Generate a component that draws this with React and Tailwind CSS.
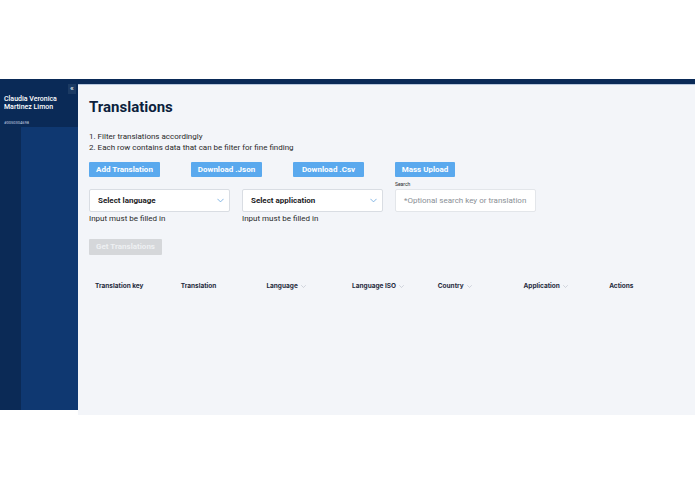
import React from "react";

const Chevron = ({ className = "" }) => (
  <svg viewBox="0 0 10 6" className={className} fill="none" stroke="currentColor" strokeWidth="1.2" strokeLinecap="round" strokeLinejoin="round">
    <path d="M1 1l4 4 4-4" />
  </svg>
);

const Btn = ({ children, w }) => (
  <button className={`h-[15px] ${w} bg-[#5aa9ee] text-white text-[8px] font-bold rounded-[1px] flex items-center justify-center`}>
    {children}
  </button>
);

const Select = ({ label }) => (
  <div className="w-[141px] h-[23px] bg-white border border-[#d9dde3] rounded-[2px] flex items-center justify-between pl-[8px] pr-[5px]">
    <span className="text-[8px] font-bold text-[#1d1d1f]">{label}</span>
    <Chevron className="w-[7px] h-[5px] text-[#6fa9df]" />
  </div>
);

const cols = ["Translation key", "Translation", "Language", "Language ISO", "Country", "Application", "Actions"];
const withChevron = new Set(["Language", "Language ISO", "Country", "Application"]);

export default function App() {
  return (
    <div className="w-[695px] h-[494px] bg-white" style={{ fontFamily: "Roboto, 'Liberation Sans', sans-serif" }}>
      <div className="h-[79px]" />
      <div className="flex h-[336px]">
        {/* Sidebar */}
        <div className="w-[78px] h-[331px] flex flex-col">
          <div className="h-[48px] bg-[#0a2a57] relative pl-[4px] pt-[16px]">
            <div className="text-white text-[7px] leading-[8px] font-medium">Claudia Veronica<br />Martinez Limon</div>
            <div className="text-[#c9d3e2] text-[4px] mt-[9px]">#0050304698</div>
            <div className="absolute right-[2px] top-[5px] w-[8px] h-[10px] bg-[#1b3a63] text-white text-[8px] leading-[10px] flex items-center justify-center">«</div>
          </div>
          <div className="flex-1 flex">
            <div className="w-[21px] bg-[#0b2a56]" />
            <div className="flex-1 bg-[#0f3871]" />
          </div>
        </div>
        {/* Main */}
        <div className="flex-1 bg-[#f3f5f9] flex flex-col">
          <div className="h-[5px] bg-[#0a2a57]" />
          <div className="h-[1px] bg-[#b9c8de]" />
          <div className="pl-[11px] pt-[12px]">
            <h1 className="text-[15px] font-bold text-[#0c1f3d] leading-[20px]">Translations</h1>
            <div className="mt-[14px] text-[8px] text-[#2a2a2a] leading-[11px]">
              <div>1. Filter translations accordingly</div>
              <div>2. Each row contains data that can be filter for fine finding</div>
            </div>
            <div className="flex gap-[31px] mt-[9px]">
              <Btn w="w-[71px]">Add Translation</Btn>
              <Btn w="w-[71px]">Download .Json</Btn>
              <Btn w="w-[71px]">Download .Csv</Btn>
              <Btn w="w-[60px]">Mass Upload</Btn>
            </div>
            <div className="flex gap-[12px] mt-[12px] items-start">
              <div className="flex flex-col">
                <Select label="Select language" />
                <span className="text-[8px] text-[#2a2a2a] mt-[1px]">Input must be filled in</span>
              </div>
              <div className="flex flex-col">
                <Select label="Select application" />
                <span className="text-[8px] text-[#2a2a2a] mt-[1px]">Input must be filled in</span>
              </div>
              <div className="flex flex-col -mt-[8px]">
                <span className="text-[5px] text-[#2a2a2a] leading-[7px] mb-[1px]">Search</span>
                <div className="w-[141px] h-[23px] bg-white border border-[#e3e6ea] rounded-[2px] flex items-center pl-[8px]">
                  <span className="text-[8px] text-[#8a8f96]">*Optional search key or translation</span>
                </div>
              </div>
            </div>
            <button className="mt-[14px] w-[73px] h-[16px] bg-[#d5d7da] text-[#eef0f2] text-[8px] font-bold rounded-[1px] flex items-center justify-center">
              Get Translations
            </button>
            <div className="mt-[27px] flex pl-[6px]" style={{ fontFamily: "Inter, 'Liberation Sans', sans-serif" }}>
              {cols.map((c) => (
                <div key={c} className="w-[85.7px] flex items-center gap-[3px] text-[6.5px] font-bold text-[#1f2a3c]">
                  {c}
                  {withChevron.has(c) && <Chevron className="w-[5px] h-[3px] text-[#b8bec8]" />}
                </div>
              ))}
            </div>
          </div>
        </div>
      </div>
    </div>
  );
}
